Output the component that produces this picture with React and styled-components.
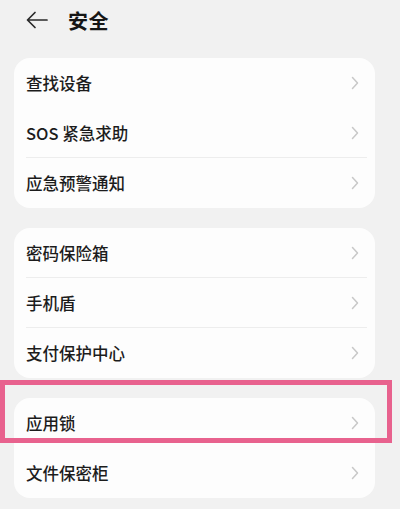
import React from 'react';
import styled, { createGlobalStyle } from 'styled-components';

const GlobalStyle = createGlobalStyle`
  html, body {
    margin: 0;
    padding: 0;
    background: #f1f1f1;
  }
  body {
    font-family: "Noto Sans CJK SC", "Noto Sans", sans-serif;
    color: #1c1c1c;
  }
`;

const groups = [
  [
    { label: '查找设备' },
    { label: 'SOS 紧急求助', line: true },
    { label: '应急预警通知' },
  ],
  [
    { label: '密码保险箱', line: true },
    { label: '手机盾', line: true },
    { label: '支付保护中心' },
  ],
  [
    { label: '应用锁', marked: true },
    { label: '文件保密柜' },
  ],
];

function Chevron() {
  return (
    <svg width="8" height="14" viewBox="0 0 8 14" fill="none">
      <path d="M1.5 1.5 L6.5 7 L1.5 12.5" stroke="#c8c8c8" strokeWidth="1.5" strokeLinecap="round" strokeLinejoin="round" />
    </svg>
  );
}

function App() {
  return (
    <Page>
      <GlobalStyle />
      <Header>
        <BackButton>
          <svg width="24" height="20" viewBox="0 0 24 20" fill="none">
            <path d="M22 10 H3 M10 2.5 L2.5 10 L10 17.5" stroke="#2a2a2a" strokeWidth="1.7" strokeLinecap="round" strokeLinejoin="round" />
          </svg>
        </BackButton>
        <Title>安全</Title>
      </Header>
      <List>
        {groups.map((rows, i) => (
          <Card key={i}>
            {rows.map((row) => (
              <Row key={row.label} line={row.line}>
                <Label>{row.label}</Label>
                <Chevron />
                {row.marked && <Highlight />}
              </Row>
            ))}
          </Card>
        ))}
      </List>
    </Page>
  );
}

export default App;

const Page = styled.div`
  width: 400px;
  height: 509px;
  overflow: hidden;
  background: #f1f1f1;
`;

const Header = styled.div`
  display: flex;
  align-items: center;
  height: 40px;
  padding-left: 25px;
`;

const BackButton = styled.div`
  display: flex;
  align-items: center;
  width: 24px;
  height: 20px;
  margin-right: 19px;
`;

const Title = styled.div`
  font-size: 20px;
  font-weight: 600;
  color: #161616;
  letter-spacing: 0.5px;
`;

const List = styled.div`
  display: flex;
  flex-direction: column;
  gap: 20px;
  padding: 18px 25px 0 14px;
`;

const Card = styled.div`
  background: #fdfdfd;
  border-radius: 16px;
`;

const Row = styled.div`
  position: relative;
  display: flex;
  align-items: center;
  justify-content: space-between;
  height: 50px;
  padding: 0 16px 0 12px;

  &::after {
    content: '';
    display: ${(p) => (p.line ? 'block' : 'none')};
    position: absolute;
    left: 12px;
    right: 8px;
    bottom: 0;
    height: 1px;
    background: #ededed;
  }
`;

const Label = styled.span`
  font-size: 16.5px;
  font-weight: 500;
  color: #1c1c1c;
`;

const Highlight = styled.div`
  position: absolute;
  left: -14px;
  top: -18px;
  width: 392px;
  height: 63px;
  box-sizing: border-box;
  border: 5px solid #e8628e;
  pointer-events: none;
`;
